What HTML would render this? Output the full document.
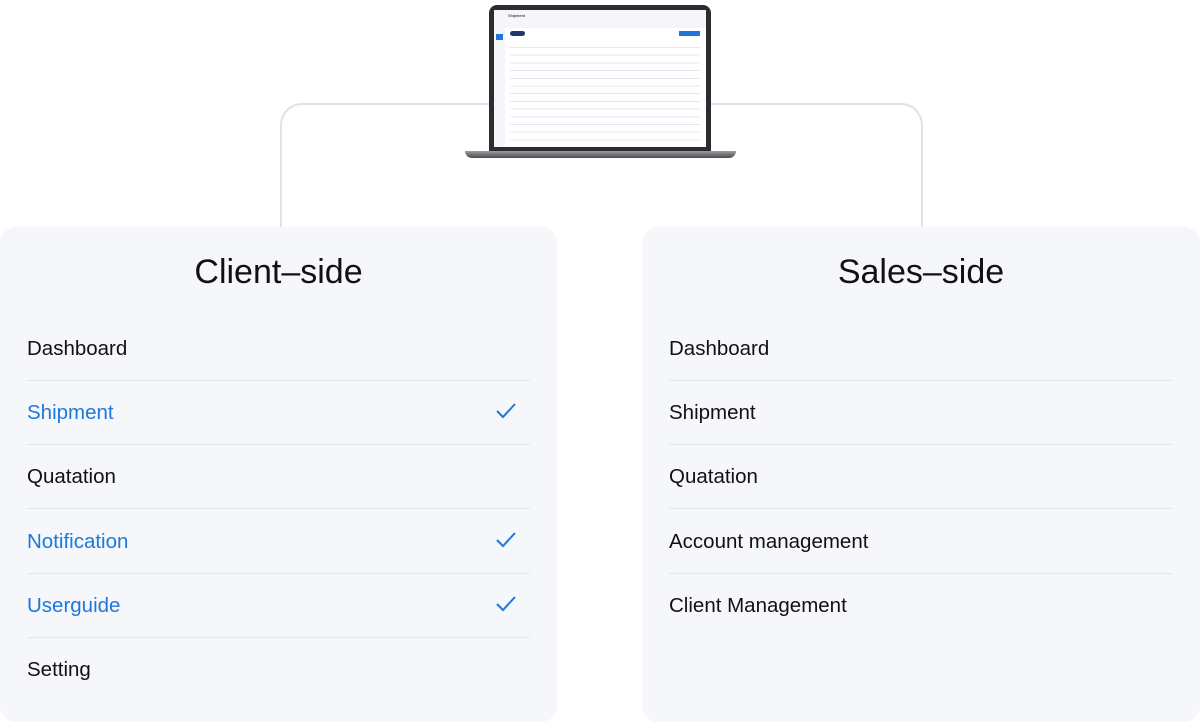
<!DOCTYPE html>
<html><head><meta charset="utf-8"><style>
body{margin:0;width:1200px;height:723px;background:#fff;font-family:"Liberation Sans",sans-serif;position:relative;overflow:hidden}
.card{position:absolute;top:227px;width:557px;height:495px;background:#f5f7fb;border-radius:16px}
.t{position:absolute;top:26px;width:100%;text-align:center;font-size:34px;color:#111}
.row{position:absolute;left:27px;width:503px;height:64px;font-size:20.5px;color:#111;line-height:66px}
.sep{border-bottom:1.5px solid #e2e6ee}
.b{color:#1e78db}
.ck{position:absolute;right:14px;top:23px}
.line{position:absolute;border:2px solid #dce3ec}
</style></head><body>
<div class="line" style="left:280px;top:103px;width:220px;height:130px;border-right:none;border-bottom:none;border-top-left-radius:22px"></div>
<div class="line" style="left:700px;top:103px;width:221px;height:130px;border-left:none;border-bottom:none;border-top-right-radius:22px"></div>

<div style="position:absolute;left:489px;top:5px;width:222px;height:147px;background:#2b2d31;border-radius:8px 8px 0 0"></div>
<div style="position:absolute;left:494px;top:10px;width:212px;height:137px;background:#fff;overflow:hidden">
 <div style="position:absolute;left:0;top:0;width:11px;height:137px;background:#f4f6fa"></div>
 <div style="position:absolute;left:2px;top:24px;width:7px;height:6px;background:#1e78db"></div>
 <div style="position:absolute;left:11px;top:0;width:201px;height:18px;background:#f4f6fa"></div>
 <div style="position:absolute;left:14px;top:3px;font-size:4px">Shipment</div>
 <div style="position:absolute;left:16px;top:21px;width:15px;height:5px;background:#1b3a6b;border-radius:3px"></div>
 <div style="position:absolute;left:185px;top:21px;width:21px;height:5px;background:#1e78db"></div>
 <div style="position:absolute;left:16px;top:33px;width:190px;height:104px;background:repeating-linear-gradient(#fff 0 4px,#e3e8f0 4px 5px,#fff 5px 7.7px)"></div>
</div>
<div style="position:absolute;left:465px;top:151px;width:271px;height:7px;background:linear-gradient(#9a9ca0,#4a4c50);border-radius:0 0 12px 12px"></div>

<div class="card" style="left:0">
 <div class="t">Client–side</div>
 <div class="row sep" style="top:89px">Dashboard</div>
 <div class="row sep b" style="top:153px">Shipment<svg class="ck" width="20" height="16" viewBox="0 0 20 16"><path d="M1 8l6 6L19 1" fill="none" stroke="#1e78db" stroke-width="2"/></svg></div>
 <div class="row sep" style="top:217px">Quatation</div>
 <div class="row sep b" style="top:282px">Notification<svg class="ck" width="20" height="16" viewBox="0 0 20 16"><path d="M1 8l6 6L19 1" fill="none" stroke="#1e78db" stroke-width="2"/></svg></div>
 <div class="row sep b" style="top:346px">Userguide<svg class="ck" width="20" height="16" viewBox="0 0 20 16"><path d="M1 8l6 6L19 1" fill="none" stroke="#1e78db" stroke-width="2"/></svg></div>
 <div class="row" style="top:410px">Setting</div>
</div>
<div class="card" style="left:642px;width:558px">
 <div class="t">Sales–side</div>
 <div class="row sep" style="top:89px">Dashboard</div>
 <div class="row sep" style="top:153px">Shipment</div>
 <div class="row sep" style="top:217px">Quatation</div>
 <div class="row sep" style="top:282px">Account management</div>
 <div class="row" style="top:346px">Client Management</div>
</div>
</body></html>
